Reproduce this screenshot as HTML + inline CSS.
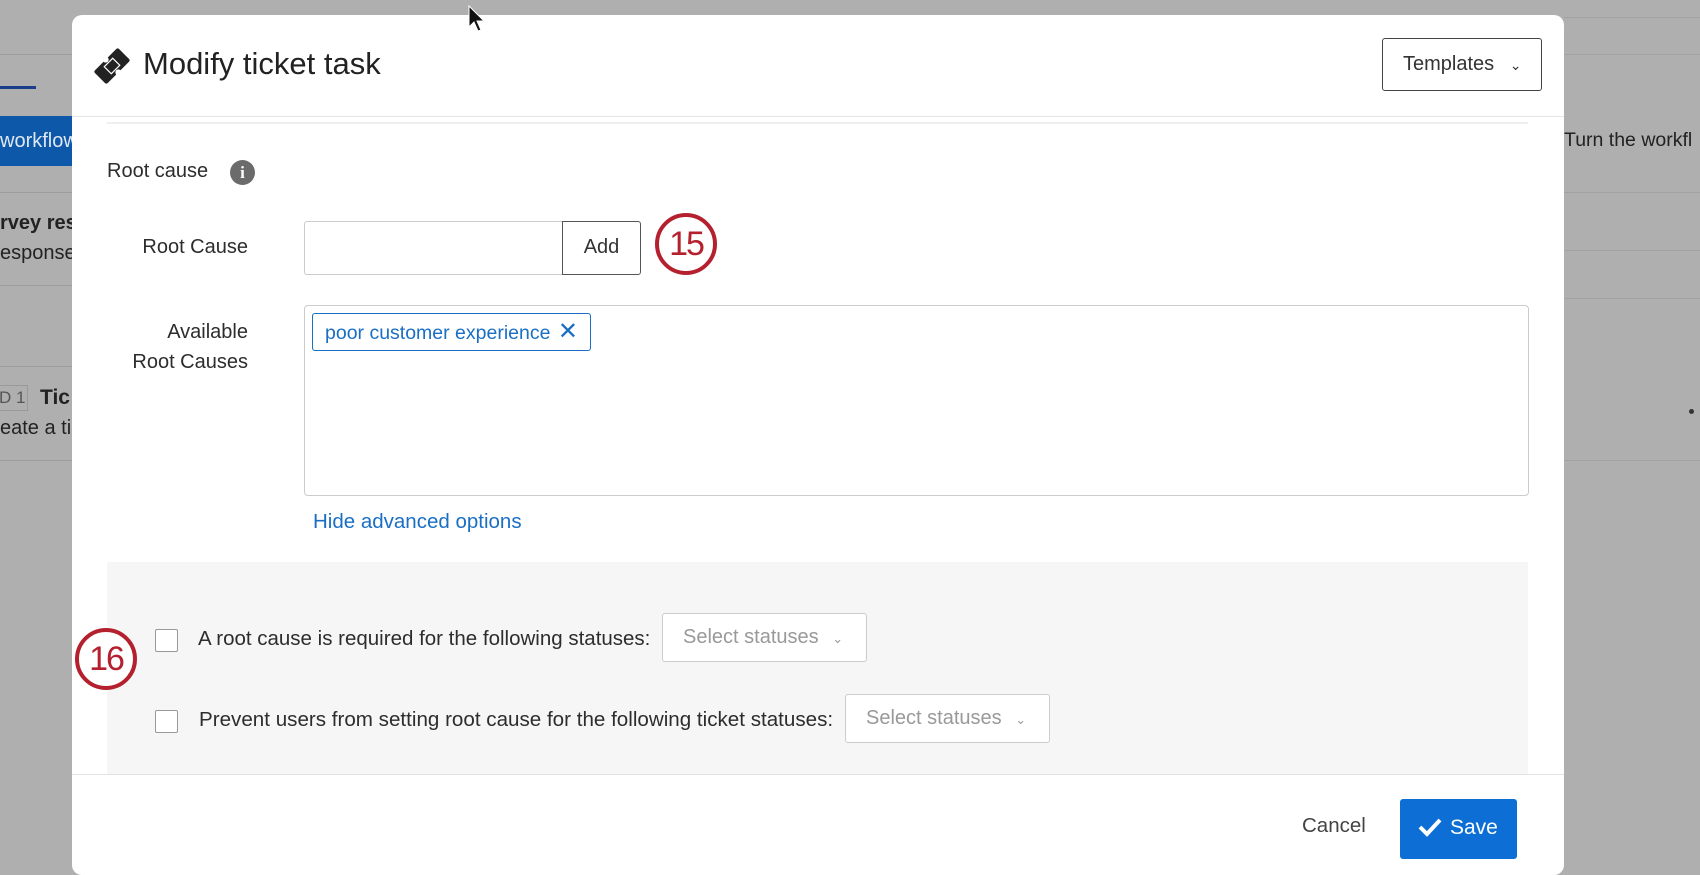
<!DOCTYPE html>
<html><head><meta charset="utf-8"><style>
*{box-sizing:border-box;margin:0;padding:0}
body{width:1700px;height:852px;overflow:hidden;background:#afafaf;font-family:"Liberation Sans",sans-serif;position:relative;color:#333}
.a{position:absolute;white-space:nowrap}
.modal{position:absolute;left:72px;top:15px;width:1492px;height:860px;background:#fff;border-radius:10px}
.lbl{font-size:19.5px;color:#2d2d2d}
.circ{position:absolute;width:62px;height:62px;border:4px solid #b5202e;border-radius:50%;color:#b5202e;font-size:34px;text-align:center;line-height:54px;background:#fff;letter-spacing:-2px}
.cb{position:absolute;width:23px;height:23px;border:1.5px solid #999;background:#fff;border-radius:2px}
.sel{position:absolute;height:49px;border:1.5px solid #ccc;border-radius:3px;background:#fff;color:#999;font-size:20px;line-height:46px;padding-left:20px}
</style></head><body>
<div class="a" style="left:0;top:54px;width:72px;height:1px;background:#9c9c9c"></div>
<div class="a" style="left:0;top:86px;width:36px;height:3px;background:#1a3e8a"></div>
<div class="a" style="left:0;top:116px;width:72px;height:50px;background:#0d58a8;color:#dfe8f3;font-size:20px;line-height:50px">workflow</div>
<div class="a" style="left:0;top:192px;width:72px;height:1px;background:#9c9c9c"></div>
<div class="a" style="left:0;top:212px;font-size:20px;font-weight:bold;color:#222">rvey res</div>
<div class="a" style="left:0;top:242px;font-size:20px;color:#222">esponse</div>
<div class="a" style="left:0;top:285px;width:72px;height:1px;background:#9c9c9c"></div>
<div class="a" style="left:0;top:366px;width:72px;height:1px;background:#9c9c9c"></div>
<div class="a" style="left:-4px;top:385px;width:32px;height:26px;border:1px solid #999;font-size:17px;color:#555;padding-left:2px;line-height:24px">D 1</div>
<div class="a" style="left:40px;top:386px;font-size:21px;font-weight:bold;color:#222">Tic</div>
<div class="a" style="left:0;top:417px;font-size:20px;color:#222">eate a tic</div>
<div class="a" style="left:0;top:460px;width:72px;height:1px;background:#9c9c9c"></div>
<div class="a" style="left:1564px;top:17px;width:136px;height:1px;background:#a2a2a2"></div>
<div class="a" style="left:1564px;top:54px;width:136px;height:1px;background:#a2a2a2"></div>
<div class="a" style="left:1564px;top:129px;font-size:19.5px;color:#222">Turn the workfl</div>
<div class="a" style="left:1564px;top:192px;width:136px;height:1px;background:#a2a2a2"></div>
<div class="a" style="left:1564px;top:250px;width:136px;height:1px;background:#a2a2a2"></div>
<div class="a" style="left:1564px;top:298px;width:136px;height:1px;background:#a2a2a2"></div>
<div class="a" style="left:1689px;top:409px;width:5px;height:5px;border-radius:50%;background:#333"></div>
<div class="a" style="left:1564px;top:460px;width:136px;height:1px;background:#a2a2a2"></div>

<div class="modal"></div>
<svg class="a" style="left:92px;top:46px" width="40" height="40" viewBox="0 0 40 40"><g transform="rotate(45 20 20)"><rect x="11" y="3" width="18" height="34" rx="2" fill="#222"/><circle cx="11" cy="20" r="3" fill="#fff"/><circle cx="29" cy="20" r="3" fill="#fff"/></g><rect x="15" y="14" width="10" height="12" transform="rotate(45 20 20)" fill="#222" stroke="#fff" stroke-width="1.2"/></svg>
<div class="a" style="left:143px;top:46px;font-size:31px;color:#222">Modify ticket task</div>
<div class="a" style="left:1382px;top:38px;width:160px;height:53px;border:1.5px solid #444;border-radius:3px;font-size:20px;line-height:50px;padding-left:20px;color:#333">Templates <span style="font-size:14px;margin-left:10px">&#8964;</span></div>
<div class="a" style="left:72px;top:116px;width:1492px;height:1px;background:#e6e6e6"></div>
<div class="a" style="left:107px;top:122px;width:1421px;height:2px;background:#efefef"></div>

<div class="a lbl" style="left:107px;top:160px;font-size:20px">Root cause</div>
<div class="a" style="left:230px;top:160px;width:25px;height:25px;border-radius:50%;background:#6b6b6b;color:#fff;font-weight:bold;font-size:17px;text-align:center;line-height:25px;font-family:'Liberation Serif',serif">i</div>

<div class="a lbl" style="left:100px;width:148px;text-align:right;top:236px;font-size:20px">Root Cause</div>
<div class="a" style="left:304px;top:221px;width:260px;height:54px;border:1.5px solid #ccc;border-right:none;border-radius:3px 0 0 3px"></div>
<div class="a" style="left:562px;top:221px;width:79px;height:54px;border:1.5px solid #555;border-radius:0 3px 3px 0;font-size:20px;text-align:center;line-height:51px;color:#333">Add</div>
<div class="circ" style="left:655px;top:213px">15</div>

<div class="a lbl" style="left:100px;width:148px;text-align:right;top:317px;line-height:30px;font-size:20px">Available<br>Root Causes</div>
<div class="a" style="left:304px;top:305px;width:1225px;height:191px;border:1.5px solid #ccc;border-radius:4px"></div>
<div class="a" style="left:312px;top:313px;width:279px;height:38px;border:1.5px solid #1a6fc4;border-radius:3px;color:#1a6fc4;font-size:19.5px;line-height:35px;padding-left:12px">poor customer experience <span style="font-size:24px;margin-left:2px">&#10005;</span></div>
<div class="a" style="left:313px;top:510px;font-size:20.5px;color:#1a6fc4">Hide advanced options</div>

<div class="a" style="left:107px;top:562px;width:1421px;height:212px;background:#f6f6f6"></div>
<div class="cb" style="left:155px;top:629px"></div>
<div class="a lbl" style="left:198px;top:627px;font-size:20.5px">A root cause is required for the following statuses:</div>
<div class="sel" style="left:662px;top:613px;width:205px">Select statuses <span style="font-size:13px;margin-left:8px">&#8964;</span></div>
<div class="circ" style="left:75px;top:628px">16</div>
<div class="cb" style="left:155px;top:710px"></div>
<div class="a lbl" style="left:199px;top:708px;font-size:20.6px">Prevent users from setting root cause for the following ticket statuses:</div>
<div class="sel" style="left:845px;top:694px;width:205px">Select statuses <span style="font-size:13px;margin-left:8px">&#8964;</span></div>

<div class="a" style="left:72px;top:774px;width:1492px;height:1px;background:#e3e3e3"></div>
<div class="a" style="left:1302px;top:814px;font-size:20.5px;color:#444">Cancel</div>
<div class="a" style="left:1400px;top:799px;width:117px;height:60px;background:#0d6fd6;border-radius:3px;color:#fff;font-size:21px;line-height:58px;padding-left:50px">Save</div>
<svg class="a" style="left:1417px;top:816px" width="26" height="22" viewBox="0 0 26 22"><path d="M3 11 L10 18 L23 4" stroke="#fff" stroke-width="4" fill="none"/></svg>
<svg class="a" style="left:468px;top:5px" width="18" height="28" viewBox="0 0 18 28"><path d="M1 1 L1 22 L6 17 L10 26 L13 25 L9 16 L16 16 Z" fill="#111" stroke="#fff" stroke-width="1"/></svg>
</body></html>
